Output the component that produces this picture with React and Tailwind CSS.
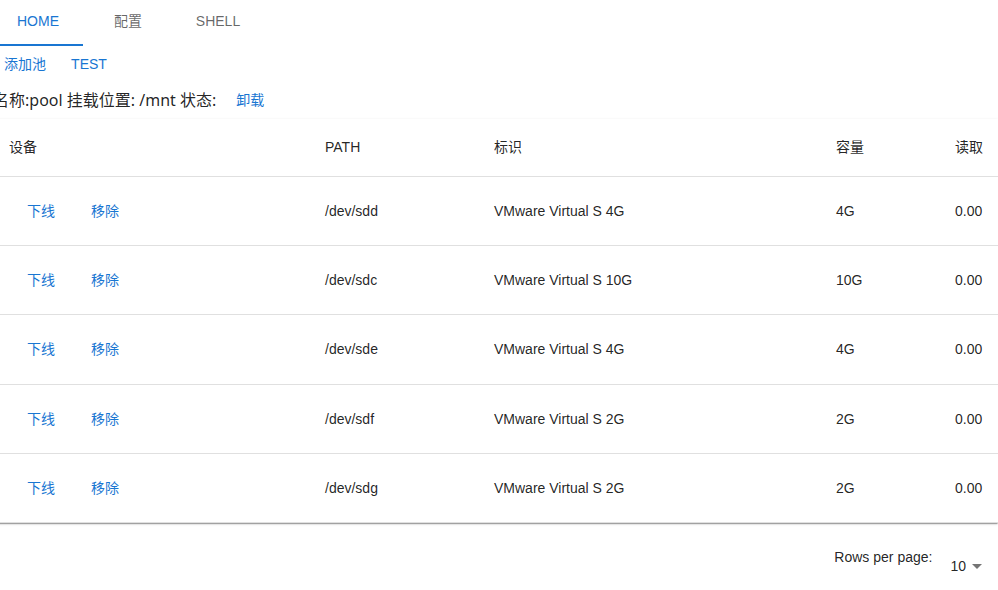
import React from 'react';

const rows = [
    { path: '/dev/sdd', id: 'VMware Virtual S 4G', size: '4G', read: '0.00' },
    { path: '/dev/sdc', id: 'VMware Virtual S 10G', size: '10G', read: '0.00' },
    { path: '/dev/sde', id: 'VMware Virtual S 4G', size: '4G', read: '0.00' },
    { path: '/dev/sdf', id: 'VMware Virtual S 2G', size: '2G', read: '0.00' },
    { path: '/dev/sdg', id: 'VMware Virtual S 2G', size: '2G', read: '0.00' },
];

const TextButton = ({ children, className = '' }) => (
    <button className={`min-w-16 h-9 px-2 text-sm text-[#1976d2] uppercase ${className}`}>
        {children}
    </button>
);

const App = () => {
    return (
        <div
            className="w-[998px] h-[590px] overflow-hidden bg-white text-[rgba(0,0,0,0.87)]"
            style={{ fontFamily: '"Liberation Sans", Arial, "Noto Sans CJK SC", sans-serif' }}
        >
            <div className="-ml-[7px] w-[1005px]">
                {/* tabs */}
                <div className="flex h-[46px]">
                    <div className="w-[90px] flex items-center justify-center text-sm text-[#1976d2] border-b-2 border-[#1976d2] pb-[3px]">HOME</div>
                    <div className="w-[90px] flex items-center justify-center text-sm text-[rgba(0,0,0,0.6)] pb-[5px]">配置</div>
                    <div className="w-[90px] flex items-center justify-center text-sm text-[rgba(0,0,0,0.6)] pb-[5px]">SHELL</div>
                </div>

                <div className="flex h-9">
                    <TextButton>添加池</TextButton>
                    <TextButton>TEST</TextButton>
                </div>

                <div className="flex items-center h-[37px] pb-[2px]">
                    <span
                        className="text-base leading-5"
                        style={{ fontFamily: '"Noto Sans", "Noto Sans CJK SC", sans-serif' }}
                    >
                        名称:pool 挂载位置: /mnt 状态:
                    </span>
                    <TextButton className="ml-[2px]">卸载</TextButton>
                </div>

                {/* table */}
                <div className="overflow-hidden bg-white shadow-[0_2px_1px_-1px_rgba(0,0,0,0.2),0_1px_1px_0_rgba(0,0,0,0.14),0_1px_3px_0_rgba(0,0,0,0.12)]">
                    <table className="w-[1090px] table-fixed border-collapse text-sm">
                        <colgroup>
                            <col className="w-[316px]" />
                            <col className="w-[169px]" />
                            <col className="w-[342px]" />
                            <col className="w-[119px]" />
                            <col className="w-[144px]" />
                        </colgroup>
                        <thead>
                            <tr className="h-[57px] border-b border-[#e0e0e0] text-left">
                                <th className="px-4 font-normal">设备</th>
                                <th className="px-4 font-normal">PATH</th>
                                <th className="px-4 font-normal">标识</th>
                                <th className="px-4 font-normal">容量</th>
                                <th className="px-4 font-normal">读取</th>
                            </tr>
                        </thead>
                        <tbody>
                            {rows.map((r, i) => (
                                <tr key={i} className="h-[69.4px] border-b border-[#e0e0e0]">
                                    <td className="px-4">
                                        <div className="flex">
                                            <TextButton>下线</TextButton>
                                            <TextButton>移除</TextButton>
                                        </div>
                                    </td>
                                    <td className="px-4">{r.path}</td>
                                    <td className="px-4">{r.id}</td>
                                    <td className="px-4">{r.size}</td>
                                    <td className="px-4">{r.read}</td>
                                </tr>
                            ))}
                        </tbody>
                    </table>
                </div>

                {/* pagination */}
                <div className="flex justify-end items-start h-[52px] pr-4 pt-6">
                    <span className="text-sm leading-5">Rows per page:</span>
                    <div className="flex items-center ml-[18px] mt-[9px] text-sm leading-5">
                        <span>10</span>
                        <svg width="10" height="5" viewBox="0 0 10 5" className="ml-[6px] mt-[1px]">
                            <path d="M0 0 L10 0 L5 5 Z" fill="rgba(0,0,0,0.54)" />
                        </svg>
                    </div>
                </div>
            </div>
        </div>
    );
};

export default App;
